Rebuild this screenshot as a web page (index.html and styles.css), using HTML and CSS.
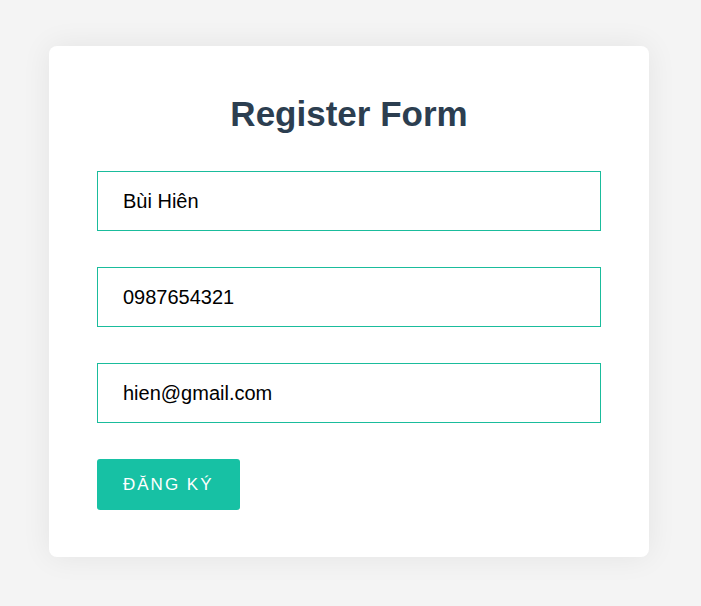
FILE: index.html
```html
<!DOCTYPE html>
<html lang="vi">
  <head>
    <meta charset="UTF-8" />
    <meta name="viewport" content="width=device-width, initial-scale=1.0" />
    <title>Register Form</title>
    <link rel="stylesheet" href="styles.css">
  </head>
  <body>
    <div class="form-card">
      <h1 class="form-title">Register Form</h1>
      <form class="register-form" action="">
        <input class="form-input" type="text" value="Bùi Hiên" />
        <input class="form-input" type="text" value="0987654321" />
        <input class="form-input" type="email" value="hien@gmail.com" />
        <button class="submit-button" type="submit">Đăng ký</button>
      </form>
    </div>
  </body>
</html>
```

FILE: styles.css
```css
body {
  font-family: "Liberation Sans", Arial, sans-serif;
  background-color: #f4f4f4;
  margin: 0;
  padding: 46px 3px 46px 0;
}
.form-card {
  background: white;
  width: 600px;
  margin: 0 auto;
  padding: 48px 48px 47px;
  box-sizing: border-box;
  border-radius: 8px;
  box-shadow: 0 0 30px rgba(0, 0, 0, 0.07);
}
.form-title {
  margin: 0 0 37px;
  font-size: 35px;
  font-weight: bold;
  text-align: center;
  color: #2c3e50;
}
.register-form {
  display: flex;
  flex-direction: column;
  align-items: flex-start;
  gap: 36px;
}
.form-input {
  width: 100%;
  height: 60px;
  box-sizing: border-box;
  padding: 0 25px;
  border: 1px solid #1abc9c;
  outline: none;
  font-family: inherit;
  font-size: 20px;
  color: #000;
}
.submit-button {
  height: 51px;
  padding: 0 26px;
  border: none;
  border-radius: 3px;
  background-color: #17c1a4;
  color: white;
  font-family: inherit;
  font-size: 17px;
  letter-spacing: 2px;
  text-transform: uppercase;
  cursor: pointer;
}
```
